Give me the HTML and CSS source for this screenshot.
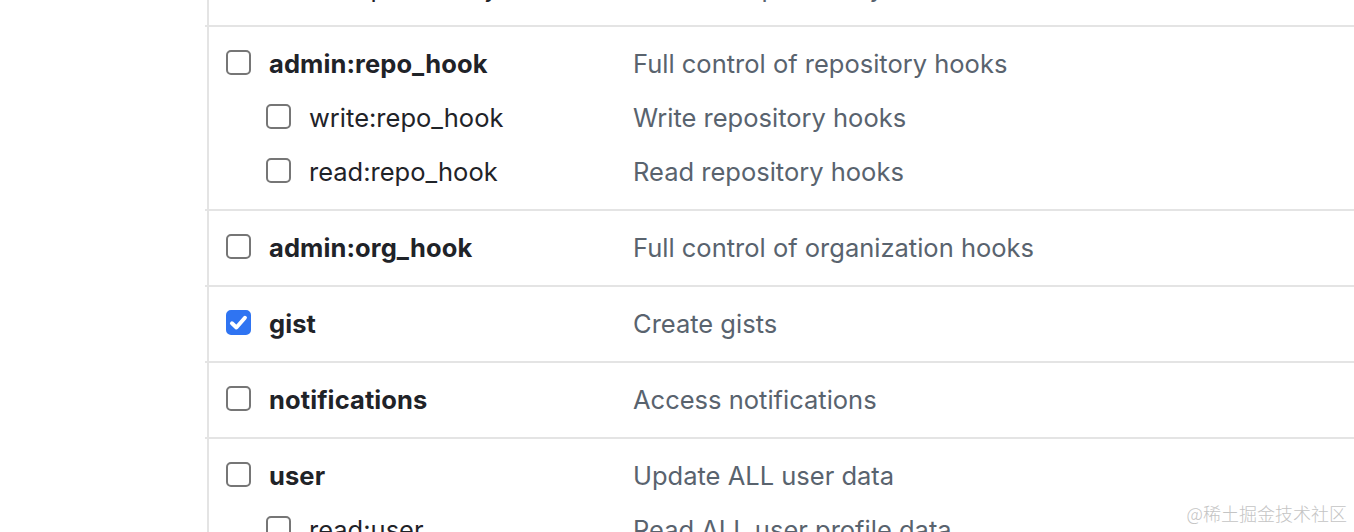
FILE: index.html
```html
<!DOCTYPE html>
<html lang="en">
<head>
<meta charset="utf-8">
<title>Token scopes</title>
<link rel="stylesheet" href="styles.css">
</head>
<body>
<div class="page">
  <div class="scopes">
    <div class="group group-first">
      <div class="row"><label class="name main"><span class="cb"></span>admin:public_key</label><span class="desc">Full control of user public keys</span></div>
      <div class="row child"><label class="name"><span class="cb"></span>write:public_key</label><span class="desc">Write user public keys</span></div>
      <div class="row child"><label class="name"><span class="cb"></span>read:public_key</label><span class="desc">Read user public keys</span></div>
    </div>
    <div class="group">
      <div class="row"><label class="name main"><span class="cb"></span>admin:repo_hook</label><span class="desc">Full control of repository hooks</span></div>
      <div class="row child"><label class="name"><span class="cb"></span>write:repo_hook</label><span class="desc">Write repository hooks</span></div>
      <div class="row child"><label class="name"><span class="cb"></span>read:repo_hook</label><span class="desc">Read repository hooks</span></div>
    </div>
    <div class="group">
      <div class="row"><label class="name main"><span class="cb"></span>admin:org_hook</label><span class="desc">Full control of organization hooks</span></div>
    </div>
    <div class="group">
      <div class="row"><label class="name main"><span class="cb checked"><svg viewBox="0 0 16 16" width="21" height="21"><path d="M3 8.6 L6.4 11.8 L12.9 4.4" fill="none" stroke="#fff" stroke-width="3" stroke-linecap="round" stroke-linejoin="round"/></svg></span>gist</label><span class="desc">Create gists</span></div>
    </div>
    <div class="group">
      <div class="row"><label class="name main"><span class="cb"></span>notifications</label><span class="desc">Access notifications</span></div>
    </div>
    <div class="group">
      <div class="row"><label class="name main"><span class="cb"></span>user</label><span class="desc">Update ALL user data</span></div>
      <div class="row child"><label class="name"><span class="cb"></span>read:user</label><span class="desc">Read ALL user profile data</span></div>
      <div class="row child"><label class="name"><span class="cb"></span>user:email</label><span class="desc">Access user email addresses (read-only)</span></div>
    </div>
  </div>
  <div class="watermark">@稀土掘金技术社区</div>
</div>
</body>
</html>
```

FILE: styles.css
```css
html, body {
  margin: 0;
  padding: 0;
  background: #ffffff;
  overflow: hidden;
}
body {
  font-family: Inter, "Noto Sans", "Liberation Sans", sans-serif;
  color: #1f2328;
}
.page {
  position: relative;
  width: 1354px;
  height: 532px;
  overflow: hidden;
}
.scopes {
  margin-left: 207px;
  border-left: 2px solid #e4e4e4;
  margin-top: -157px;
}
.group {
  margin-left: -4px;
  padding: 9px 0 11px 4px;
  border-bottom: 2px solid #e4e4e4;
}
.row {
  display: grid;
  grid-template-columns: 407px 1fr;
  align-items: center;
  height: 54px;
  padding-left: 17px;
}
.name {
  display: flex;
  align-items: center;
  gap: 18px;
  font-size: 25.5px;
  color: #1f2328;
  white-space: nowrap;
}
.name.main {
  font-weight: 700;
  letter-spacing: 0.1px;
}
.row.child .name {
  padding-left: 40px;
}
.desc {
  font-size: 25.5px;
  color: #59636e;
  white-space: nowrap;
}
.cb {
  flex: none;
  box-sizing: border-box;
  width: 25px;
  height: 25px;
  border: 2px solid #767676;
  border-radius: 5px;
  background: #fff;
  margin-top: -2px;
  display: flex;
  align-items: center;
  justify-content: center;
}
.cb.checked {
  background: #2f74f2;
  border-color: #2f74f2;
}
.watermark {
  position: absolute;
  right: 7px;
  bottom: 6px;
  font-family: "Noto Sans CJK SC", "Noto Sans", sans-serif;
  font-size: 18px;
  color: #c4c4c4;
  font-weight: 300;
}
```
